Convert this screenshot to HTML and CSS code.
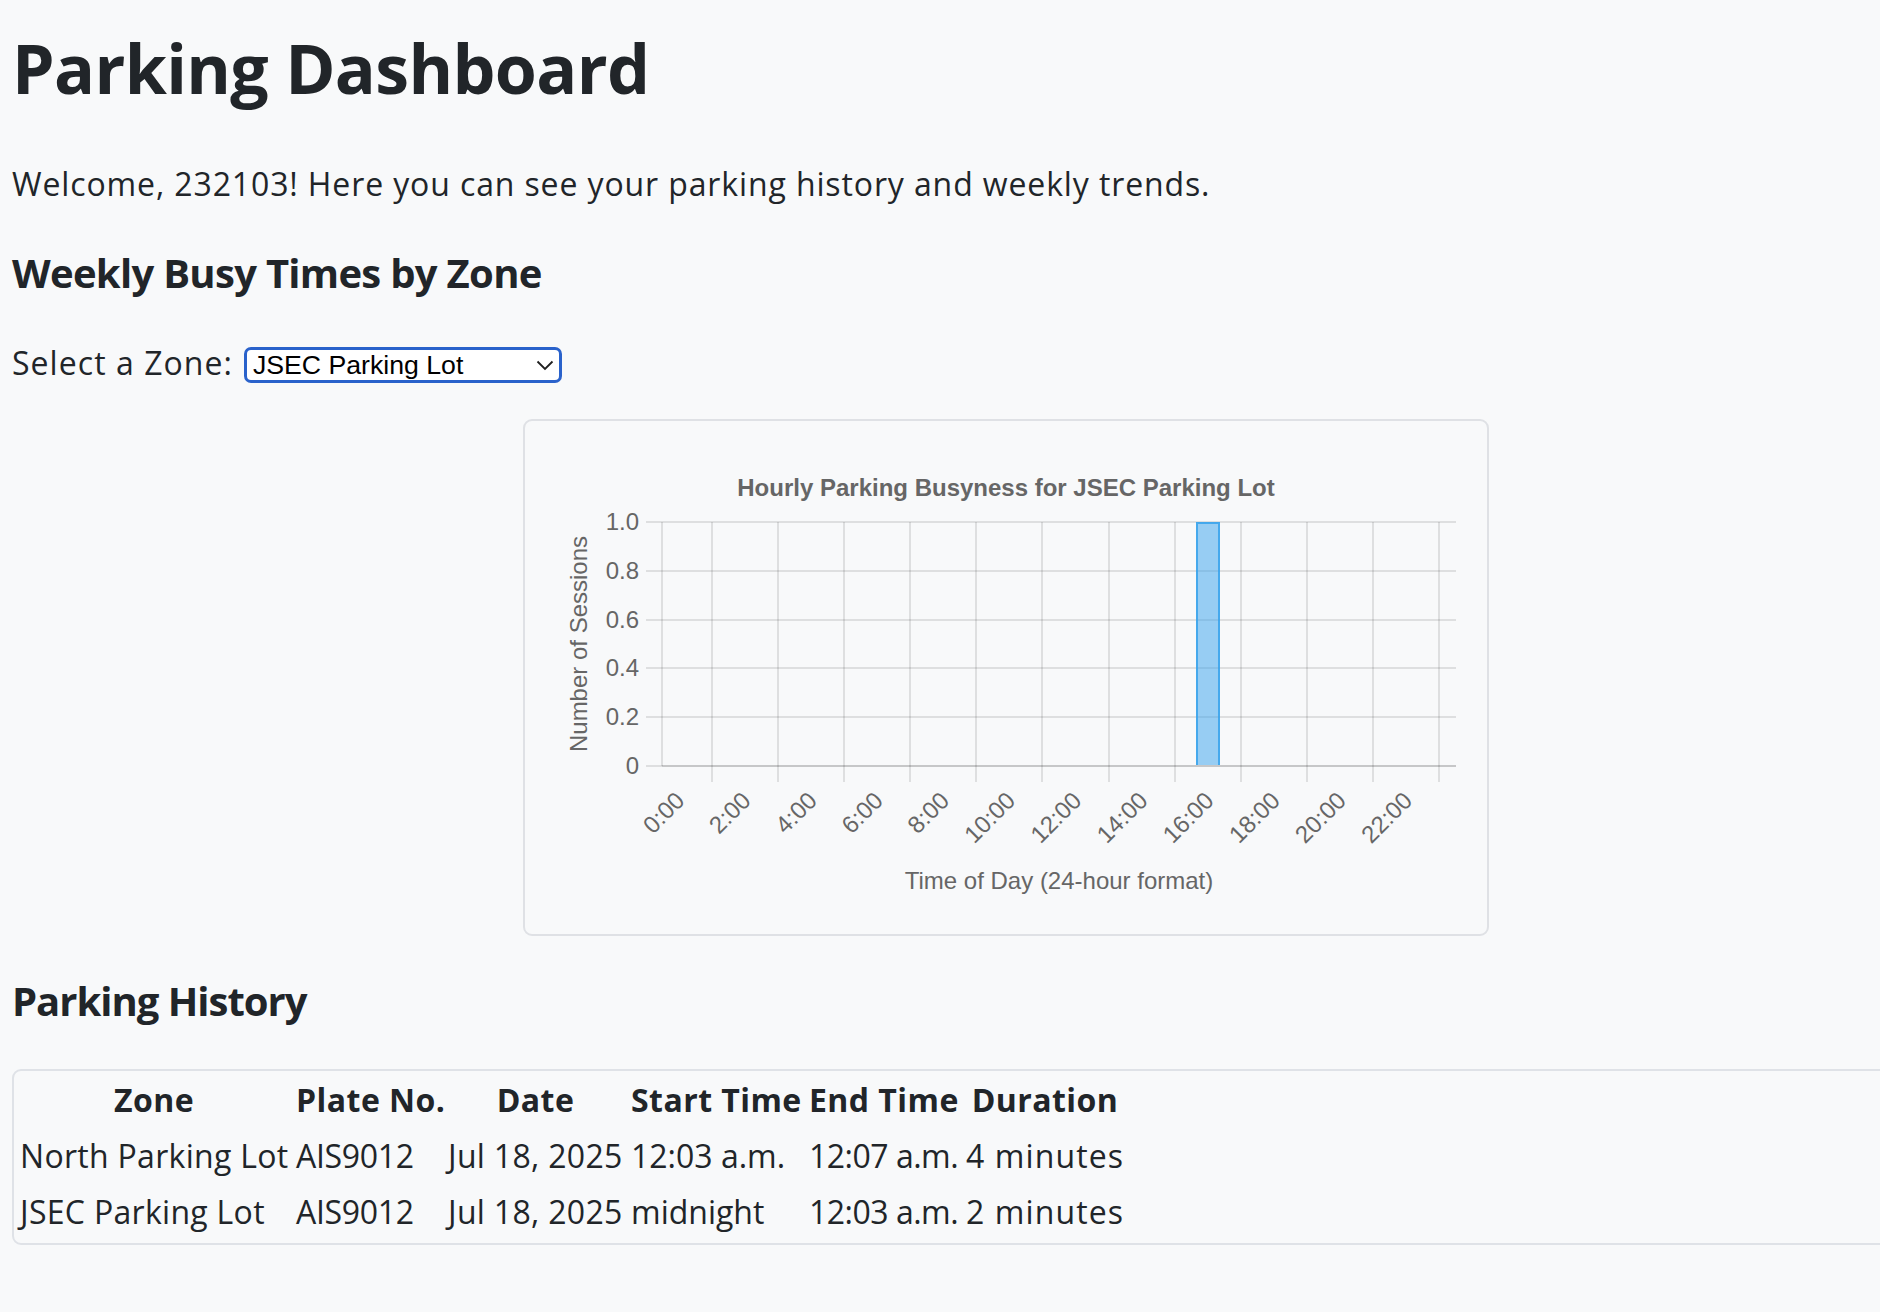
FILE: index.html
```html
<!DOCTYPE html>
<html lang="en">
<head>
<meta charset="utf-8">
<title>Parking Dashboard</title>
<link rel="stylesheet" href="styles.css">
</head>
<body>
<main class="page">
  <h1 class="title">Parking Dashboard</h1>
  <p class="welcome">Welcome, 232103! Here you can see your parking history and weekly trends.</p>

  <h2 class="section-title">Weekly Busy Times by Zone</h2>
  <div class="zone-row">
    <label class="zone-label" for="zone">Select a Zone:</label>
    <div class="select-wrap">
      <select id="zone" class="zone-select">
        <option>JSEC Parking Lot</option>
        <option>North Parking Lot</option>
      </select>
      <svg class="chevron" width="18" height="11" viewBox="0 0 18 11"><path d="M1.5 1.5 L9 9 L16.5 1.5"/></svg>
    </div>
  </div>

  <div class="chart-card">
    <svg class="chart" width="962" height="513" viewBox="0 0 962 513">
      <text class="chart-title" x="481" y="75" text-anchor="middle">Hourly Parking Busyness for JSEC Parking Lot</text>

      <g class="grid">
        <line x1="121" y1="101" x2="931" y2="101"/>
        <line x1="121" y1="150" x2="931" y2="150"/>
        <line x1="121" y1="199" x2="931" y2="199"/>
        <line x1="121" y1="247" x2="931" y2="247"/>
        <line x1="121" y1="296" x2="931" y2="296"/>
        <line x1="121" y1="345" x2="137" y2="345"/>
        <line x1="137" y1="101" x2="137" y2="345"/>
        <line x1="187" y1="101" x2="187" y2="361"/>
        <line x1="253" y1="101" x2="253" y2="361"/>
        <line x1="319" y1="101" x2="319" y2="361"/>
        <line x1="385" y1="101" x2="385" y2="361"/>
        <line x1="451" y1="101" x2="451" y2="361"/>
        <line x1="517" y1="101" x2="517" y2="361"/>
        <line x1="584" y1="101" x2="584" y2="361"/>
        <line x1="650" y1="101" x2="650" y2="361"/>
        <line x1="716" y1="101" x2="716" y2="361"/>
        <line x1="782" y1="101" x2="782" y2="361"/>
        <line x1="848" y1="101" x2="848" y2="361"/>
        <line x1="914" y1="101" x2="914" y2="361"/>
      </g>
      <line class="axis-zero" x1="137" y1="345" x2="931" y2="345"/>

      <rect class="bar-fill" x="671" y="101" width="24" height="243"/>
      <path class="bar-edge" d="M672 344 L672 102 L694 102 L694 344"/>

      <g class="y-ticks">
        <text x="114" y="109" text-anchor="end">1.0</text>
        <text x="114" y="158" text-anchor="end">0.8</text>
        <text x="114" y="207" text-anchor="end">0.6</text>
        <text x="114" y="255" text-anchor="end">0.4</text>
        <text x="114" y="304" text-anchor="end">0.2</text>
        <text x="114" y="353" text-anchor="end">0</text>
      </g>

      <text class="axis-title" x="62" y="223" text-anchor="middle" transform="rotate(-90 62 223)">Number of Sessions</text>

      <g class="x-ticks">
        <text transform="translate(156 376) rotate(-45)" x="0" y="7" text-anchor="end">0:00</text>
        <text transform="translate(222.2 376) rotate(-45)" x="0" y="7" text-anchor="end">2:00</text>
        <text transform="translate(288.4 376) rotate(-45)" x="0" y="7" text-anchor="end">4:00</text>
        <text transform="translate(354.5 376) rotate(-45)" x="0" y="7" text-anchor="end">6:00</text>
        <text transform="translate(420.7 376) rotate(-45)" x="0" y="7" text-anchor="end">8:00</text>
        <text transform="translate(486.8 376) rotate(-45)" x="0" y="7" text-anchor="end">10:00</text>
        <text transform="translate(553 376) rotate(-45)" x="0" y="7" text-anchor="end">12:00</text>
        <text transform="translate(619.2 376) rotate(-45)" x="0" y="7" text-anchor="end">14:00</text>
        <text transform="translate(685.3 376) rotate(-45)" x="0" y="7" text-anchor="end">16:00</text>
        <text transform="translate(751.5 376) rotate(-45)" x="0" y="7" text-anchor="end">18:00</text>
        <text transform="translate(817.6 376) rotate(-45)" x="0" y="7" text-anchor="end">20:00</text>
        <text transform="translate(883.8 376) rotate(-45)" x="0" y="7" text-anchor="end">22:00</text>
      </g>

      <text class="axis-title" x="534" y="468" text-anchor="middle">Time of Day (24-hour format)</text>
    </svg>
  </div>

  <h2 class="section-title history-title">Parking History</h2>
  <div class="table-wrap">
    <table class="history">
      <thead>
        <tr>
          <th class="c-zone">Zone</th>
          <th class="c-plate">Plate No.</th>
          <th class="c-date">Date</th>
          <th class="c-start">Start Time</th>
          <th class="c-end">End Time</th>
          <th class="c-dur">Duration</th>
        </tr>
      </thead>
      <tbody>
        <tr>
          <td>North Parking Lot</td>
          <td>AIS9012</td>
          <td>Jul 18, 2025</td>
          <td>12:03 a.m.</td>
          <td>12:07 a.m.</td>
          <td>4 minutes</td>
        </tr>
        <tr>
          <td>JSEC Parking Lot</td>
          <td>AIS9012</td>
          <td>Jul 18, 2025</td>
          <td>midnight</td>
          <td>12:03 a.m.</td>
          <td>2 minutes</td>
        </tr>
      </tbody>
    </table>
  </div>
</main>
</body>
</html>
```

FILE: styles.css
```css
html {
  overflow: hidden;
}

body {
  margin: 0;
  background: #f8f9fa;
  color: #212529;
  font-family: "Open Sans", "Noto Sans", sans-serif;
}

.page {
  box-sizing: content-box;
  width: 1988px;
  padding: 27px 12px 0;
}

.title {
  margin: 0;
  font-size: 68px;
  font-weight: 700;
  line-height: 82px;
  letter-spacing: -0.65px;
}

.welcome {
  margin: 51px 0 0;
  font-size: 32px;
  line-height: 48px;
  letter-spacing: 0.88px;
}

.section-title {
  margin: 41px 0 0;
  font-size: 40px;
  font-weight: 700;
  line-height: 48px;
  letter-spacing: -0.7px;
}

.zone-row {
  display: flex;
  align-items: flex-start;
  gap: 11px;
  margin-top: 42px;
  height: 48px;
}

.zone-label {
  font-size: 32px;
  line-height: 48px;
  letter-spacing: 1.05px;
}

.select-wrap {
  position: relative;
  margin-top: 8px;
}

.zone-select {
  display: block;
  box-sizing: border-box;
  width: 318px;
  height: 36px;
  margin: 0;
  padding: 0 0 0 6px;
  border: 3px solid #2a62cb;
  border-radius: 7px;
  background: #ffffff;
  color: #000000;
  font-family: "Liberation Sans", Arial, sans-serif;
  font-size: 26.67px;
  line-height: 30px;
  appearance: none;
  -webkit-appearance: none;
  outline: none;
}

.chevron {
  position: absolute;
  left: 292px;
  top: 13px;
  fill: none;
  stroke: #1f1f1f;
  stroke-width: 1.8;
  pointer-events: none;
}

.chart-card {
  width: 962px;
  height: 513px;
  margin: 32px auto 0;
  border: 2px solid #dfe1e5;
  border-radius: 9px;
}

.chart {
  display: block;
  font-family: "Liberation Sans", Arial, sans-serif;
}

.chart text {
  fill: #666666;
  font-size: 24px;
}

.chart .chart-title {
  font-weight: 700;
}

.grid line {
  stroke: rgba(0, 0, 0, 0.1);
  stroke-width: 2;
}

.axis-zero {
  stroke: rgba(0, 0, 0, 0.2);
  stroke-width: 2;
}

.bar-fill {
  fill: rgba(54, 162, 235, 0.5);
}

.bar-edge {
  fill: none;
  stroke: rgb(54, 162, 235);
  stroke-width: 2;
  opacity: 0.85;
}

.history-title {
  margin-top: 41px;
  letter-spacing: -1px;
}

.table-wrap {
  margin-top: 44px;
  border: 2px solid #dfe2e7;
  border-radius: 9px;
}

.history {
  table-layout: fixed;
  width: 1116px;
  border-collapse: separate;
  border-spacing: 4px;
  font-size: 32px;
  line-height: 48px;
  white-space: nowrap;
}

.history th,
.history td {
  padding: 1px 2px 3px;
  overflow: visible;
}

.history th {
  font-weight: 700;
  text-align: center;
  letter-spacing: 0.45px;
}

.history td {
  text-align: left;
  letter-spacing: 0.3px;
}

.history td:nth-child(2) {
  letter-spacing: -0.3px;
}

.history td:nth-child(4) {
  letter-spacing: 0;
}

.history td:nth-child(5) {
  letter-spacing: -0.5px;
}

.history td:nth-child(6) {
  letter-spacing: 1.1px;
}

.c-zone { width: 268px; }
.c-plate { width: 144px; }
.c-date { width: 175px; }
.c-start { width: 170px; }
.c-end { width: 149px; }
.c-dur { width: 158px; }
```
